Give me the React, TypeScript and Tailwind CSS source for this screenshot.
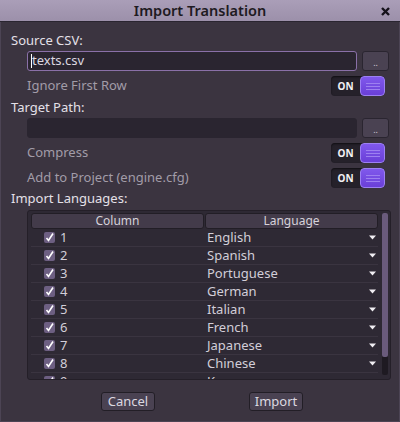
import React from "react";

const langs = ["English", "Spanish", "Portuguese", "German", "Italian", "French", "Japanese", "Chinese", "Korean"];

function Toggle() {
  return (
    <div className="flex h-[20px] w-[54px] rounded-[4px] bg-[#25212a] shadow-[inset_0_1px_2px_rgba(0,0,0,0.6)]">
      <div className="flex w-[29px] items-center justify-center text-[10px] font-bold text-[#f2f0f4]">ON</div>
      <div className="flex flex-1 flex-col items-center justify-center gap-[2px] rounded-[4px] border border-[#9c80f2] bg-gradient-to-b from-[#8058ec] to-[#6a3fd8]">
        <div className="h-px w-[14px] bg-[#9d80f0]" />
        <div className="h-px w-[14px] bg-[#9d80f0]" />
        <div className="h-px w-[14px] bg-[#9d80f0]" />
      </div>
    </div>
  );
}

function DotsButton() {
  return (
    <div className="flex h-[20px] w-[27px] items-end justify-center rounded-[3px] border border-[#2a2530] bg-[#4a4252] pb-[3px] text-[9px] leading-none text-[#cfc8d6]">
      ..
    </div>
  );
}

function Check() {
  return (
    <div className="flex h-[11px] w-[11px] items-center justify-center rounded-[2px] bg-[#6d5f82]">
      <svg width="9" height="9" viewBox="0 0 9 9">
        <path d="M1.5 5l2 2.5L8 0.5" stroke="#fff" strokeWidth="1.6" fill="none" />
      </svg>
    </div>
  );
}

export default function App() {
  return (
    <div className="flex h-[422px] w-[400px] flex-col overflow-hidden bg-[#3b3440] font-['Noto_Sans',sans-serif] text-[13px] text-[#e4e0e8]">
      {/* title bar */}
      <div className="relative flex h-[22px] items-center justify-center border-b border-[#2a2530] bg-gradient-to-b from-[#aa9eb8] to-[#9c90aa] text-[14.5px] font-semibold text-[#1e1a22]">
        Import Translation
        <svg className="absolute right-[10px] top-[7px]" width="9" height="9" viewBox="0 0 9 9">
          <path d="M1 1l7 7M8 1L1 8" stroke="#15121a" strokeWidth="2.4" />
        </svg>
      </div>

      <div className="flex flex-1 flex-col border-x border-b border-[#4c4454] px-[10px]">
        <div className="mt-[8px] h-[20px] leading-[20px]">Source CSV:</div>
        <div className="ml-[16px] mt-[1px] flex gap-[5px]">
          <div className="flex h-[20px] w-[332px] items-center rounded-[3px] border border-[#8a70a8] bg-[#2a2530] pl-[3px] text-[#dcd8e0]">
            <span className="h-[14px] w-px bg-white" />texts.csv
          </div>
          <DotsButton />
        </div>
        <div className="ml-[16px] mt-[5px] flex h-[20px] items-center justify-between pr-[4px]">
          <span className="text-[#a29ca8]">Ignore First Row</span>
          <Toggle />
        </div>
        <div className="mt-[1px] h-[20px] leading-[20px]">Target Path:</div>
        <div className="ml-[16px] mt-[1px] flex gap-[5px]">
          <div className="h-[20px] w-[332px] rounded-[3px] border border-[#2a2530] bg-[#2a2530]" />
          <DotsButton />
        </div>
        <div className="ml-[16px] mt-[5px] flex h-[20px] items-center justify-between pr-[4px]">
          <span className="text-[#a29ca8]">Compress</span>
          <Toggle />
        </div>
        <div className="ml-[16px] mt-[5px] flex h-[20px] items-center justify-between pr-[4px]">
          <span className="text-[#a29ca8]">Add to Project (engine.cfg)</span>
          <Toggle />
        </div>
        <div className="h-[20px] leading-[20px]">Import Languages:</div>

        {/* table */}
        <div className="ml-[16px] mt-[2px] flex h-[170px] w-[364px] gap-[4px] overflow-hidden rounded-[3px] border border-[#241f28] bg-[#2e2934] pl-[3px] pr-[2px] pt-[2px]">
          <div className="flex flex-1 flex-col overflow-hidden">
            <div className="flex h-[16px] shrink-0 gap-px">
              <div className="flex flex-1 items-center justify-center rounded-[3px] border border-[#221e26] bg-[#433b4a] text-[12px] text-[#d6d2da]">Column</div>
              <div className="flex flex-1 items-center justify-center rounded-[3px] border border-[#221e26] bg-[#433b4a] text-[12px] text-[#d6d2da]">Language</div>
            </div>
            {langs.map((l, i) => (
              <div key={l} className="flex h-[18px] shrink-0 items-center border-b border-[#3a3440] text-[#d2ced8]">
                <div className="flex w-[174px] items-center gap-[5px] pl-[13px]">
                  <Check />
                  <span>{i + 1}</span>
                </div>
                <div className="flex flex-1 items-center justify-between pl-[2px] pr-[2px]">
                  <span>{l}</span>
                  <svg width="7" height="5" viewBox="0 0 7 5"><path d="M0 0.5h7L3.5 4.5z" fill="#f0eef2" /></svg>
                </div>
              </div>
            ))}
          </div>
          <div className="mb-[4px] flex w-[6px] flex-col rounded-[2px] bg-[#1e1a22]">
            <div className="h-[144px] rounded-[2px] bg-[#6a5b7c]" />
          </div>
        </div>

        <div className="mt-[12px] flex pl-[90px]">
          <div className="flex h-[19px] w-[54px] items-center justify-center rounded-[3px] border border-[#221e26] bg-[#4a4252] text-[#dcd8e0]">Cancel</div>
          <div className="ml-[94px] flex h-[19px] w-[54px] items-center justify-center rounded-[3px] border border-[#221e26] bg-[#4a4252] text-[#dcd8e0]">Import</div>
        </div>
      </div>
    </div>
  );
}
